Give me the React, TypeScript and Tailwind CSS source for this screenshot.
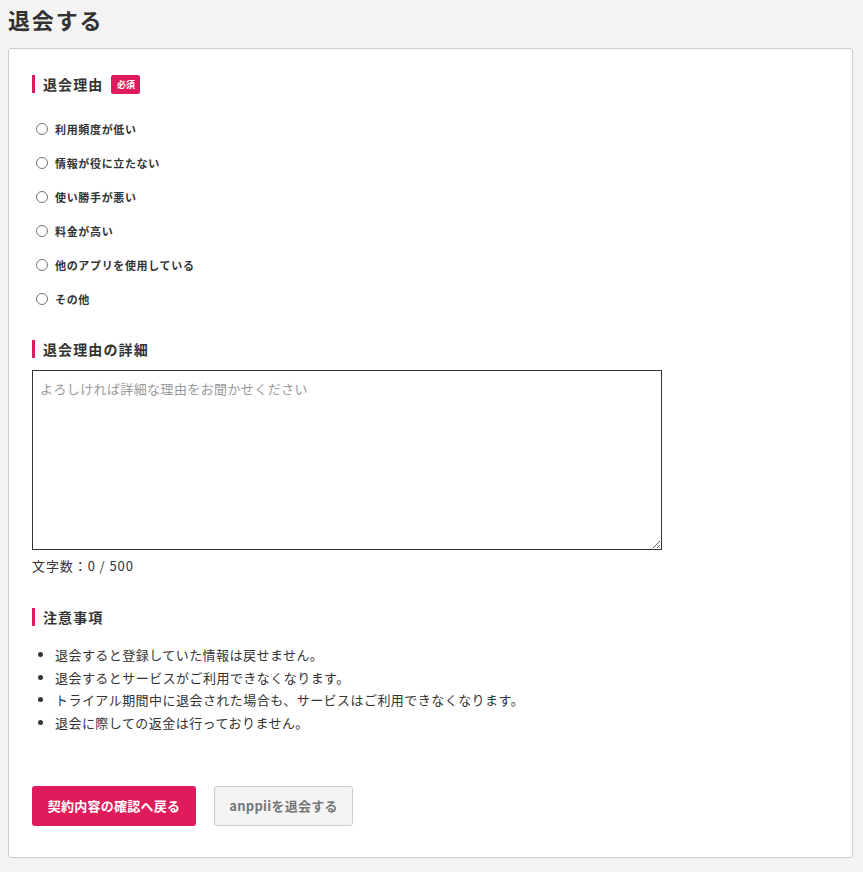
import React from "react";

const reasons = [
  "利用頻度が低い",
  "情報が役に立たない",
  "使い勝手が悪い",
  "料金が高い",
  "他のアプリを使用している",
  "その他",
];

const notes = [
  "退会すると登録していた情報は戻せません。",
  "退会するとサービスがご利用できなくなります。",
  "トライアル期間中に退会された場合も、サービスはご利用できなくなります。",
  "退会に際しての返金は行っておりません。",
];

function Heading({ children }: { children: React.ReactNode }) {
  return (
    <div className="flex items-center h-[20px]">
      <span className="w-[3px] h-[18px] bg-[#e01b5b] mr-[8px]" />
      <span className="text-[14px] font-bold tracking-[0.08em] text-[#333] leading-[20px]">{children}</span>
    </div>
  );
}

export default function App() {
  const font = { fontFamily: '"Noto Sans CJK JP", "Noto Sans", sans-serif' };
  return (
    <div className="min-h-[872px] bg-[#f4f4f4] pb-[14px]" style={font}>
      <h1 className="pl-[8px] pt-[3px] text-[22px] leading-[32px] font-bold tracking-[0.085em] text-[#333] mb-[13px]">
        退会する
      </h1>
      <div className="ml-[8px] w-[845px] bg-white border border-[#ccc] rounded-[3px] pl-[23px] pt-[25px] pb-[31px]">
        <div className="flex items-center">
          <Heading>退会理由</Heading>
          <span className="ml-[8px] h-[19px] w-[29px] text-center rounded-[2px] bg-[#e01b5b] text-white text-[9px] font-bold leading-[19px]">
            必須
          </span>
        </div>
        <div className="mt-[18px] flex flex-col">
          {reasons.map((r) => (
            <label key={r} className="flex items-center h-[34px] pl-[4px]">
              <span className="w-[12px] h-[12px] rounded-full border border-[#777] bg-white shrink-0" />
              <span className="ml-[7px] text-[11px] font-bold tracking-[0.06em] text-[#333] leading-[16px]">{r}</span>
            </label>
          ))}
        </div>
        <div className="mt-[23px]">
          <Heading>退会理由の詳細</Heading>
        </div>
        <textarea
          className="mt-[11px] block w-[630px] h-[180px] border border-[#333] px-[7px] py-[8px] text-[13px] tracking-[0.03em] leading-[20px] text-[#333] placeholder:text-[#999] outline-none"
          placeholder="よろしければ詳細な理由をお聞かせください"
        />
        <div className="mt-[6px] text-[13px] leading-[20px] tracking-[0.07em] text-[#333]">文字数：0 / 500</div>
        <div className="mt-[31px]">
          <Heading>注意事項</Heading>
        </div>
        <ul className="mt-[17px] list-disc pl-[23px] text-[13px] leading-[22.7px] tracking-[0.035em] text-[#333]">
          {notes.map((n) => (
            <li key={n}>{n}</li>
          ))}
        </ul>
        <div className="mt-[51px] flex items-center gap-[18px]">
          <button className="h-[40px] w-[164px] rounded-[3px] bg-[#e01b5b] text-white text-[13px] font-bold tracking-[0.02em]">
            契約内容の確認へ戻る
          </button>
          <button className="h-[40px] w-[139px] rounded-[3px] bg-[#f4f4f4] border border-[#ccc] text-[#777] text-[13px] font-bold tracking-[0.02em]">
            anppiiを退会する
          </button>
        </div>
      </div>
    </div>
  );
}
